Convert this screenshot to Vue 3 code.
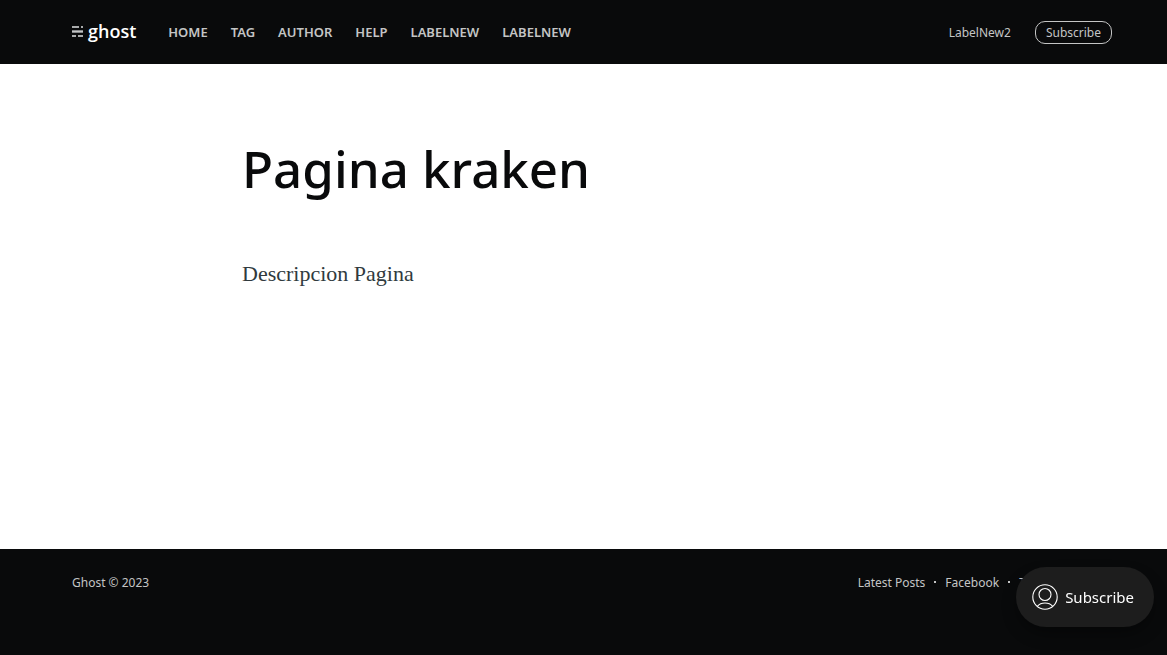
<script setup>
const navigation = ['Home', 'Tag', 'Author', 'Help', 'LabelNew', 'LabelNew']
const footerLinks = ['Latest Posts', 'Facebook', 'Twitter', 'Ghost']
</script>

<template>
  <div class="site">
    <header class="site-header">
      <nav class="primary" aria-label="Primary">
        <a class="logo" href="#" aria-label="ghost">
          <svg width="12" height="12" viewBox="0 0 12 12" shape-rendering="crispEdges" aria-hidden="true">
            <g fill="#a9abac">
              <path d="M0 0h7v2H0zM9 0h2v2H9zM0 9h4v2H0zM6 9h5v2H6z" />
              <path d="M0 4h11v1H0zM0 6h11v1H0z" fill="#85878a" />
              <path d="M0 5h11v1H0z" fill="#c4c5c5" />
            </g>
          </svg>
          <span>ghost</span>
        </a>
        <ul>
          <li v-for="(item, i) in navigation" :key="i"><a href="#">{{ item }}</a></li>
        </ul>
      </nav>
      <nav class="secondary" aria-label="Secondary">
        <a href="#">LabelNew2</a>
        <a class="outline" href="#">Subscribe</a>
      </nav>
    </header>

    <main>
      <article>
        <h1>Pagina kraken</h1>
        <p>Descripcion Pagina</p>
      </article>
    </main>

    <footer class="site-footer">
      <section>Ghost © 2023</section>
      <nav aria-label="Footer">
        <a v-for="link in footerLinks" :key="link" href="#">{{ link }}</a>
      </nav>
    </footer>

    <button class="portal" type="button">
      <svg width="26" height="26" viewBox="0 0 26 26" fill="none" stroke="#fff" stroke-width="1.1" aria-hidden="true">
        <circle cx="13" cy="13" r="12.2" />
        <circle cx="13" cy="10.5" r="6" />
        <path d="M5.3 22.3C7.2 20.1 9.9 19 13 19s5.800 1.100 7.700 3.300" />
      </svg>
      <span>Subscribe</span>
    </button>
  </div>
</template>

<style>
body {
  margin: 0;
  background: #fff;
}
</style>

<style scoped>
.site {
  display: flex;
  flex-direction: column;
  min-height: 100vh;
  font-family: "Noto Sans", "Open Sans", sans-serif;
  font-size: 12px;
}
a {
  color: inherit;
  text-decoration: none;
}
.site-header {
  display: flex;
  align-items: center;
  justify-content: space-between;
  box-sizing: border-box;
  height: 64px;
  padding: 0 55px 0 72px;
  background: #090a0b;
  color: #c4c5c5;
}
.primary,
.primary ul,
.secondary {
  display: flex;
  align-items: center;
}
.primary {
  gap: 32px;
}
.primary ul {
  gap: 23px;
  margin: 0;
  padding: 0;
  list-style: none;
  font-size: 13px;
  font-weight: 600;
  line-height: 20px;
  text-transform: uppercase;
}
.logo {
  display: flex;
  align-items: center;
  gap: 4px;
}
.logo span {
  color: #fff;
  font-family: "Open Sans", sans-serif;
  font-size: 18px;
  font-weight: 600;
  line-height: 24px;
  padding-bottom: 2px;
}
.secondary {
  gap: 24px;
}
.outline {
  padding: 0 10px;
  border: 1px solid #c4c5c5;
  border-radius: 10px;
  line-height: 21px;
}
main {
  flex: 1;
}
article {
  padding: 72px 20px 0 242px;
}
h1 {
  margin: 0;
  color: #090a0b;
  font-size: 51px;
  font-weight: 500;
  line-height: 64px;
}
p {
  margin: 58px 0 0;
  color: #303a3e;
  font-family: "Liberation Serif", serif;
  font-size: 22px;
  line-height: 32px;
}
.site-footer {
  display: flex;
  justify-content: space-between;
  box-sizing: border-box;
  height: 106px;
  padding: 24px 55px 0 72px;
  background: #090a0b;
  color: #c4c5c5;
  line-height: 20px;
}
.site-footer nav {
  display: flex;
}
.site-footer nav a + a::before {
  content: "";
  display: inline-block;
  width: 2px;
  height: 2px;
  margin: 0 9px 4px;
  background: #c4c5c5;
}
.portal {
  position: fixed;
  right: 13px;
  bottom: 28px;
  display: flex;
  align-items: center;
  gap: 7px;
  height: 60px;
  padding: 0 20px 0 16px;
  border: 0;
  border-radius: 30px;
  background: #1d1d1d;
  box-shadow: 0 8px 16px -2px rgba(0, 0, 0, 0.4);
  color: #fff;
  font-family: inherit;
  font-size: 15px;
  font-weight: 400;
}
</style>
